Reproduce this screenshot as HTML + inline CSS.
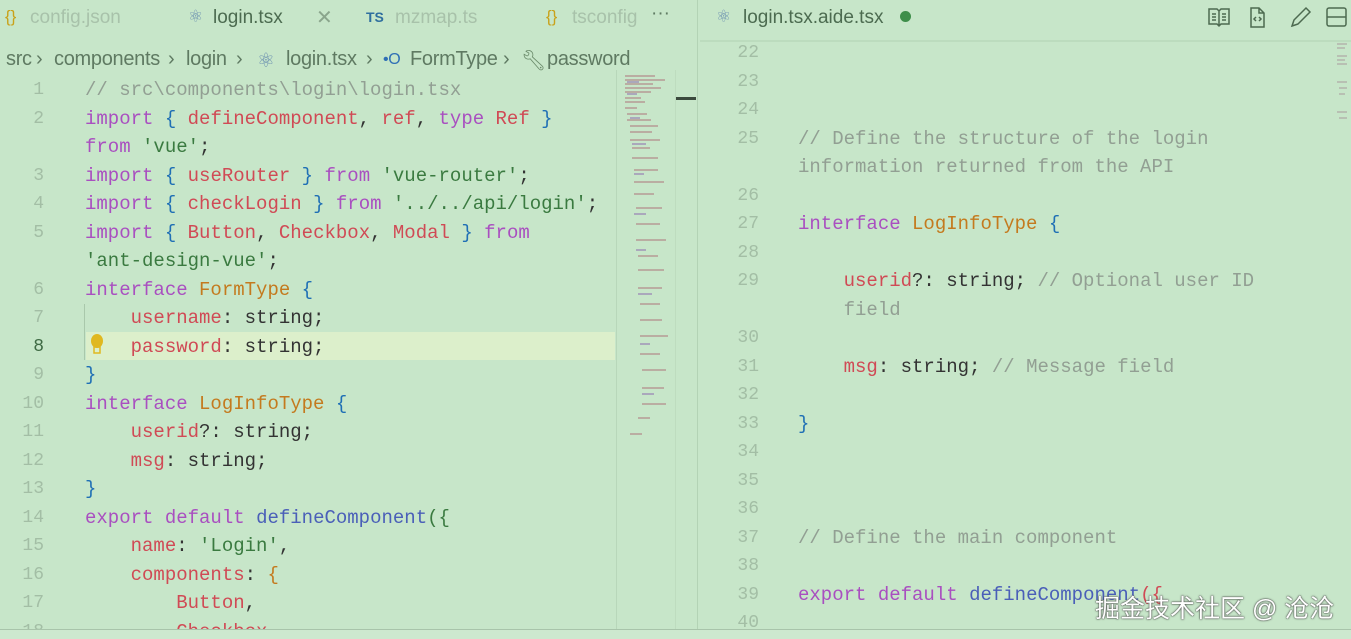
<!DOCTYPE html>
<html><head><meta charset="utf-8"><style>
*{margin:0;padding:0;box-sizing:border-box}
html,body{width:1351px;height:639px;overflow:hidden}
body{background:#c7e6c9;position:relative;font-family:"Liberation Sans",sans-serif}
.ui{position:absolute;font-size:19px;color:#5f7a62;white-space:nowrap}
.bc{position:absolute;top:48px;font-size:20px;color:#5f7a62;white-space:nowrap;letter-spacing:-0.3px}
.code{position:absolute;font-family:"Liberation Mono",monospace;font-size:19px;white-space:pre;color:#333;line-height:28px}
.ln{position:absolute;font-family:"Liberation Mono",monospace;font-size:18px;color:#a3bea5;text-align:right;width:40px;line-height:28px}
.k{color:#a94fc0}.v{color:#d04a55}.t{color:#c47a1e}.b{color:#1f6fb5}.f{color:#4a5fb8}.s{color:#3a7a40}.c{color:#929f93}.y{color:#c9a21a}
</style></head><body>
<!-- tab bar -->
<div class="ui" style="left:5px;top:7px;color:#c9a21a;font-size:17px">{}</div>
<div class="ui" style="left:30px;top:7px;color:#a8c2aa">config.json</div>
<div class="ui" style="left:188px;top:7px;color:#6a8fb0;font-size:17px">⚛</div>
<div class="ui" style="left:213px;top:7px;color:#4c6b50">login.tsx</div>
<div class="ui" style="left:316px;top:5px;color:#8aa58c;font-size:20px">✕</div>
<div class="ui" style="left:366px;top:9px;color:#2f6f9f;font-size:14px;font-weight:bold">TS</div>
<div class="ui" style="left:395px;top:7px;color:#a8c2aa">mzmap.ts</div>
<div class="ui" style="left:546px;top:7px;color:#c9a21a;font-size:17px">{}</div>
<div class="ui" style="left:572px;top:7px;color:#a8c2aa;width:68px;overflow:hidden">tsconfig</div>
<div class="ui" style="left:651px;top:3px;color:#5f7a62">···</div>
<div style="position:absolute;left:697px;top:0;width:1px;height:639px;background:#b3d3b5"></div>
<!-- breadcrumb -->
<div class="bc" style="left:6px">src</div>
<div class="bc" style="left:36px">›</div>
<div class="bc" style="left:54px">components</div>
<div class="bc" style="left:168px">›</div>
<div class="bc" style="left:186px">login</div>
<div class="bc" style="left:236px">›</div>
<div class="bc" style="left:257px;color:#6a8fb0">⚛</div>
<div class="bc" style="left:286px">login.tsx</div>
<div class="bc" style="left:366px">›</div>
<div class="bc" style="left:383px;color:#2f6fb5;font-size:16px;top:51px">•O</div>
<div class="bc" style="left:410px">FormType</div>
<div class="bc" style="left:503px">›</div>
<div class="bc" style="left:521px;color:#6a8a6a">🔧︎</div>
<div class="bc" style="left:547px">password</div>
<!-- right tab -->
<div class="ui" style="left:716px;top:7px;color:#6a8fb0;font-size:17px">⚛</div>
<div class="ui" style="left:743px;top:7px;color:#4c6b50">login.tsx.aide.tsx</div>
<div style="position:absolute;left:900px;top:11px;width:11px;height:11px;border-radius:50%;background:#3e8e4a"></div>
<svg style="position:absolute;left:1208px;top:6px" width="140" height="22" fill="none" stroke="#4d6a50" stroke-width="1.5">
<path d="M1 3h8l2 2 2-2h8v15h-8l-2 2-2-2H1z M11 5v15 M4 8h4M4 11h4M4 14h4M14 8h4M14 11h4M14 14h4"/>
<path d="M43 2h8l5 5v14H43z M51 2v5h5 M48 11l-2 2 2 2 M51 11l2 2-2 2"/>
<path d="M84 20l2-6 12-12 4 4-12 12z M84 20l6-2"/>
<rect x="119" y="2" width="19" height="18" rx="2"/><path d="M119 11h19"/>
</svg>
<div style="position:absolute;left:700px;top:40px;width:651px;height:2px;background:#bcdcbe"></div>
<!-- current line -->
<div style="position:absolute;left:86px;top:332px;width:529px;height:28px;background:#dcefcb"></div>
<div style="position:absolute;left:84px;top:304px;width:1px;height:56px;background:#a9c8ab"></div>
<svg style="position:absolute;left:89px;top:334px" width="16" height="22"><ellipse cx="8" cy="7" rx="6" ry="7" fill="#e0b820"/><rect x="5" y="13" width="6" height="6" fill="none" stroke="#e0b820" stroke-width="1.5"/></svg>
<!-- left line numbers -->
<div class="ln" style="left:4px;top:76px;line-height:28.5px">1<br>2<br><br>3<br>4<br>5<br><br>6<br>7<br><span style="color:#3f6a44">8</span><br>9<br>10<br>11<br>12<br>13<br>14<br>15<br>16<br>17<br>18</div>
<div class="code" style="left:85px;top:76px;line-height:28.5px"><span class="c">// src\components\login\login.tsx</span>
<span class="k">import</span> <span class="b">{</span> <span class="v">defineComponent</span>, <span class="v">ref</span>, <span class="k">type</span> <span class="v">Ref</span> <span class="b">}</span>
<span class="k">from</span> <span class="s">'vue'</span>;
<span class="k">import</span> <span class="b">{</span> <span class="v">useRouter</span> <span class="b">}</span> <span class="k">from</span> <span class="s">'vue-router'</span>;
<span class="k">import</span> <span class="b">{</span> <span class="v">checkLogin</span> <span class="b">}</span> <span class="k">from</span> <span class="s">'../../api/login'</span>;
<span class="k">import</span> <span class="b">{</span> <span class="v">Button</span>, <span class="v">Checkbox</span>, <span class="v">Modal</span> <span class="b">}</span> <span class="k">from</span>
<span class="s">'ant-design-vue'</span>;
<span class="k">interface</span> <span class="t">FormType</span> <span class="b">{</span>
    <span class="v">username</span>: string;
    <span class="v">password</span>: string;
<span class="b">}</span>
<span class="k">interface</span> <span class="t">LogInfoType</span> <span class="b">{</span>
    <span class="v">userid</span>?: string;
    <span class="v">msg</span>: string;
<span class="b">}</span>
<span class="k">export</span> <span class="k">default</span> <span class="f">defineComponent</span><span class="s">({</span>
    <span class="v">name</span>: <span class="s">'Login'</span>,
    <span class="v">components</span>: <span class="t">{</span>
        <span class="v">Button</span>,
        <span class="v">Checkbox</span>,</div>
<!-- minimap -->
<div style="position:absolute;left:616px;top:70px;width:1px;height:560px;background:#b8d7ba"></div>
<svg style="position:absolute;left:622px;top:74px" width="52" height="372">
<g stroke-width="1.5" opacity="0.7">
<path d="M3 2h30M3 6h40M3 10h28M3 14h36M3 18h26M3 24h16M3 28h20M3 34h12M5 40h20M5 46h24M8 52h28M8 58h22M8 66h30M10 74h18M10 84h26M12 96h24M12 108h30M12 120h20M14 134h26M14 150h24M14 166h30M16 182h20M16 196h26M16 214h24M18 230h20M18 246h22M18 262h28M18 280h20M20 296h24M20 314h22M20 330h24M16 344h12M8 360h12" stroke="#b07a80"/>
<path d="M5 8h12M5 20h10M8 44h10M10 70h14M12 100h10M12 140h12M14 176h10M16 220h14M18 270h10M20 320h12" stroke="#9070b0"/>
</g></svg>
<div style="position:absolute;left:676px;top:97px;width:20px;height:3px;background:#3b4a3d"></div>
<div style="position:absolute;left:675px;top:70px;width:1px;height:560px;background:#bedcbf"></div>
<!-- right line numbers -->
<div class="ln" style="left:719px;top:39px;line-height:28.5px">22<br>23<br>24<br>25<br><br>26<br>27<br>28<br>29<br><br>30<br>31<br>32<br>33<br>34<br>35<br>36<br>37<br>38<br>39<br>40</div>
<div class="code" style="left:798px;top:39px;line-height:28.5px">


<span class="c">// Define the structure of the login</span>
<span class="c">information returned from the API</span>

<span class="k">interface</span> <span class="t">LogInfoType</span> <span class="b">{</span>

    <span class="v">userid</span>?: string; <span class="c">// Optional user ID</span>
    <span class="c">field</span>

    <span class="v">msg</span>: string; <span class="c">// Message field</span>

<span class="b">}</span>



<span class="c">// Define the main component</span>

<span class="k">export</span> <span class="k">default</span> <span class="f">defineComponent</span><span class="v">({</span></div>
<svg style="position:absolute;left:1336px;top:42px" width="14" height="80" opacity="0.6"><path d="M1 2h10M1 6h8M1 14h10M1 18h8M1 22h10M1 40h10M3 46h8M3 52h6M1 70h10M3 76h8" stroke="#a08090" stroke-width="1.2"/></svg>
<!-- bottom -->
<div style="position:absolute;left:0;top:629px;width:1351px;height:1px;background:#a8c4aa"></div>
<div style="position:absolute;left:0;top:630px;width:1351px;height:9px;background:#cde8cf"></div>
<div class="ui" style="left:1095px;top:589px;font-size:25px;color:#fff;font-family:'Liberation Sans','Noto Sans CJK SC',sans-serif;text-shadow:0 0 2px #444,0 0 1px #222">掘金技术社区 @ 沧沧</div>
</body></html>
